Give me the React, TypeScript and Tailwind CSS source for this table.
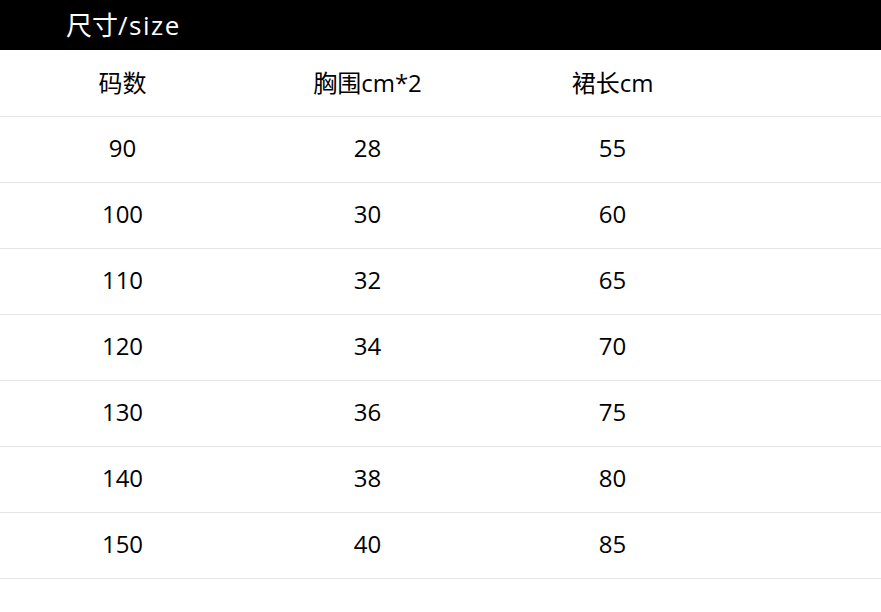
import React from 'react';

const rows = [
  ['90', '28', '55'],
  ['100', '30', '60'],
  ['110', '32', '65'],
  ['120', '34', '70'],
  ['130', '36', '75'],
  ['140', '38', '80'],
  ['150', '40', '85'],
];

const App: React.FC = () => {
  return (
    <div
      className="w-[881px] h-[612px] bg-white text-black overflow-hidden"
      style={{ fontFamily: '"Open Sans", "Noto Sans CJK SC", sans-serif' }}
    >
      <div className="h-[50px] bg-black flex items-center pl-[66px]">
        <span className="text-white text-[26px] leading-none">
          尺寸<span className="tracking-[1.5px]">/size</span>
        </span>
      </div>

      <div className="grid grid-cols-[245px_245px_245px] h-[67px] items-center border-b border-[#e5e5e5] text-[24px]">
        <div className="text-center">码数</div>
        <div className="text-center">胸围cm*2</div>
        <div className="text-center">裙长cm</div>
      </div>

      {rows.map((r) => (
        <div
          key={r[0]}
          className="grid grid-cols-[245px_245px_245px] h-[66px] items-center pb-[3px] border-b border-[#e5e5e5] text-[24px]"
        >
          {r.map((c, i) => (
            <div key={i} className="text-center">{c}</div>
          ))}
        </div>
      ))}
    </div>
  );
};

export default App;
